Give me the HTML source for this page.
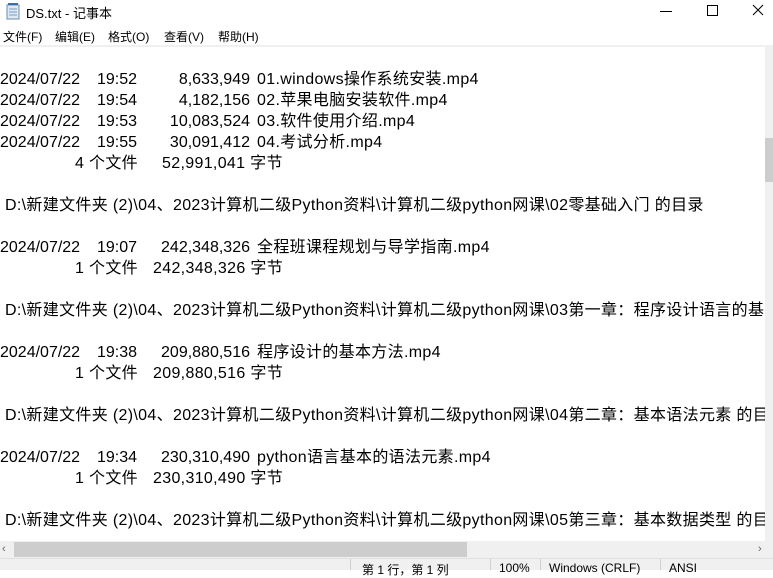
<!DOCTYPE html>
<html><head><meta charset="utf-8"><style>
*{margin:0;padding:0;box-sizing:border-box}
body{width:773px;height:570px;overflow:hidden;background:#fff;font-family:"Liberation Sans","Noto Sans CJK SC",sans-serif;position:relative;color:#000}
.t{position:absolute;white-space:nowrap}
.title{top:3px;left:26px;font-size:13px}
.menu{top:28px;font-size:12px}
.ln{position:absolute;height:21px;line-height:21px;font-size:16px;white-space:nowrap;left:0;width:765px;overflow:hidden;margin-top:1px}
.ln span{position:absolute;top:0}
.ln .n{letter-spacing:0.33px}
.r{text-align:right}
</style></head><body>
<svg class="t" style="left:5px;top:3px" width="16" height="17" viewBox="0 0 16 17"><rect x="2" y="2" width="12" height="14" fill="#dfe9f3" stroke="#6b8db3"/><path d="M4 6h8M4 9h8M4 12h8" stroke="#7a99c0"/><path d="M3 1h10" stroke="#3a6ea5" stroke-width="2"/></svg>
<div class="t title">DS.txt - 记事本</div>
<svg class="t" style="left:655px;top:4px" width="115" height="14"><path d="M5 7.5h12" stroke="#000"/><rect x="52.5" y="1.5" width="10" height="10" fill="none" stroke="#000"/><path d="M98 1l10 10M108 1l-10 10" stroke="#000"/></svg>
<div class="t menu" style="left:3px">文件(F)</div>
<div class="t menu" style="left:55px">编辑(E)</div>
<div class="t menu" style="left:108px">格式(O)</div>
<div class="t menu" style="left:164px">查看(V)</div>
<div class="t menu" style="left:218px">帮助(H)</div>
<div class="t" style="top:45px;left:0;width:773px;height:2px;background:#f0f0f0"></div>

<div class="ln" style="top:68px"><span style="left:0">2024/07/22</span><span style="left:97px">19:52</span><span class="r" style="right:515px">8,633,949</span><span class="n" style="left:257px">01.windows操作系统安装.mp4</span></div>
<div class="ln" style="top:89px"><span style="left:0">2024/07/22</span><span style="left:97px">19:54</span><span class="r" style="right:515px">4,182,156</span><span class="n" style="left:257px">02.苹果电脑安装软件.mp4</span></div>
<div class="ln" style="top:110px"><span style="left:0">2024/07/22</span><span style="left:97px">19:53</span><span class="r" style="right:515px">10,083,524</span><span class="n" style="left:257px">03.软件使用介绍.mp4</span></div>
<div class="ln" style="top:131px"><span style="left:0">2024/07/22</span><span style="left:97px">19:55</span><span class="r" style="right:515px">30,091,412</span><span class="n" style="left:257px">04.考试分析.mp4</span></div>
<div class="ln" style="top:152px"><span class="n" style="left:75px">4 个文件</span><span class="n" style="left:162px">52,991,041 字节</span></div>
<div class="ln" style="top:194px"><span class="n" style="left:5px">D:\新建文件夹 (2)\04、2023计算机二级Python资料\计算机二级python网课\02零基础入门 的目录</span></div>
<div class="ln" style="top:236px"><span style="left:0">2024/07/22</span><span style="left:97px">19:07</span><span class="r" style="right:515px">242,348,326</span><span class="n" style="left:257px">全程班课程规划与导学指南.mp4</span></div>
<div class="ln" style="top:257px"><span class="n" style="left:75px">1 个文件</span><span class="n" style="left:153px">242,348,326 字节</span></div>
<div class="ln" style="top:299px"><span class="n" style="left:5px">D:\新建文件夹 (2)\04、2023计算机二级Python资料\计算机二级python网课\03第一章：程序设计语言的基本语法元素</span></div>
<div class="ln" style="top:341px"><span style="left:0">2024/07/22</span><span style="left:97px">19:38</span><span class="r" style="right:515px">209,880,516</span><span class="n" style="left:257px">程序设计的基本方法.mp4</span></div>
<div class="ln" style="top:362px"><span class="n" style="left:75px">1 个文件</span><span class="n" style="left:153px">209,880,516 字节</span></div>
<div class="ln" style="top:404px"><span class="n" style="left:5px">D:\新建文件夹 (2)\04、2023计算机二级Python资料\计算机二级python网课\04第二章：基本语法元素 的目录</span></div>
<div class="ln" style="top:446px"><span style="left:0">2024/07/22</span><span style="left:97px">19:34</span><span class="r" style="right:515px">230,310,490</span><span class="n" style="left:257px">python语言基本的语法元素.mp4</span></div>
<div class="ln" style="top:467px"><span class="n" style="left:75px">1 个文件</span><span class="n" style="left:153px">230,310,490 字节</span></div>
<div class="ln" style="top:509px"><span class="n" style="left:5px">D:\新建文件夹 (2)\04、2023计算机二级Python资料\计算机二级python网课\05第三章：基本数据类型 的目录</span></div>

<div class="t" style="left:765px;top:47px;width:8px;height:495px;background:#f0f0f0"></div>
<div class="t" style="left:765px;top:138px;width:8px;height:44px;background:#cdcdcd"></div>
<div class="t" style="left:0;top:541px;width:773px;height:17px;background:#f0f0f0"></div>
<div class="t" style="left:14px;top:542px;width:453px;height:15px;background:#cdcdcd"></div>
<div class="t" style="left:2px;top:543px;font-size:11px;color:#606060">‹</div>
<div class="t" style="left:758px;top:543px;font-size:11px;color:#606060">›</div>
<div class="t" style="left:0;top:558px;width:773px;height:12px;background:#f0f0f0;border-top:1px solid #e0e0e0"></div>
<div class="t" style="left:350px;top:559px;width:1px;height:11px;background:#d0d0d0"></div>
<div class="t" style="left:490px;top:559px;width:1px;height:11px;background:#d0d0d0"></div>
<div class="t" style="left:540px;top:559px;width:1px;height:11px;background:#d0d0d0"></div>
<div class="t" style="left:660px;top:559px;width:1px;height:11px;background:#d0d0d0"></div>
<div class="t" style="left:362px;top:561px;font-size:12px">第 1 行，第 1 列</div>
<div class="t" style="left:499px;top:561px;font-size:12px">100%</div>
<div class="t" style="left:549px;top:561px;font-size:12px">Windows (CRLF)</div>
<div class="t" style="left:669px;top:561px;font-size:12px">ANSI</div>
</body></html>
